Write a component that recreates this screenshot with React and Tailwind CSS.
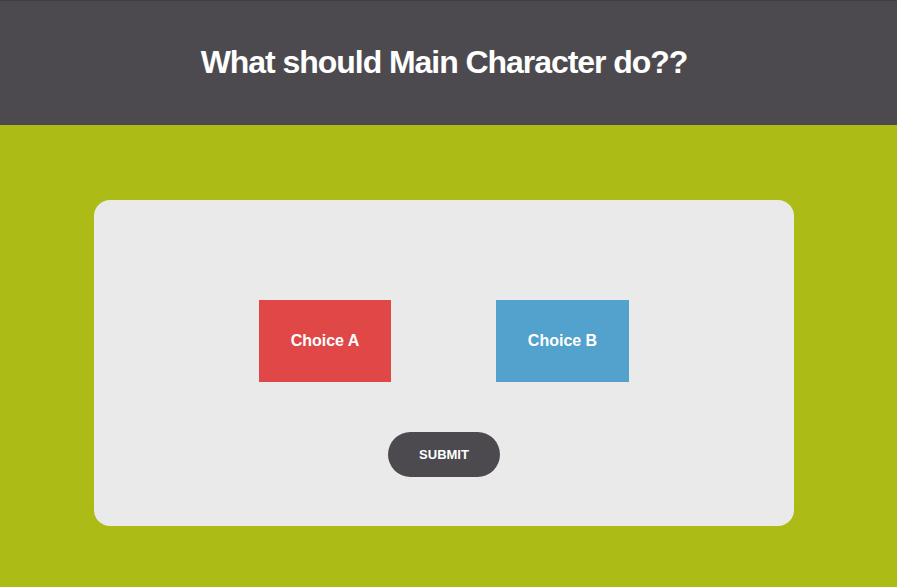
import React, { useState } from 'react';

const App = () => {
    const [choice, setChoice] = useState(null);

    return (
        <div className="min-h-screen bg-[#adbb17] font-['Liberation_Sans',Arial,sans-serif]">
            {/* Header */}
            <div className="h-[125px] w-full bg-[#4c4a4e] border-t border-[#3b4046] flex items-center justify-center pr-[9px]">
                <h1 className="text-[32px] leading-none font-bold text-white tracking-[-1.05px] pb-[2px]">What should Main Character do??</h1>
            </div>

            {/* Card */}
            <div className="pt-[75px] pl-[94px]">
                <div className="w-[700px] h-[326px] bg-[#eaeaea] rounded-[16px] flex flex-col items-center pt-[100px]">
                    <div className="flex gap-[105px]">
                        <button
                            className="w-[132px] h-[82px] bg-[#e04747] text-white text-[16px] font-bold"
                            onClick={() => setChoice('A')}
                        >
                            Choice A
                        </button>
                        <button
                            className="w-[133px] h-[82px] bg-[#53a1cd] text-white text-[16px] font-bold"
                            onClick={() => setChoice('B')}
                        >
                            Choice B
                        </button>
                    </div>
                    <button className="mt-[50px] w-[112px] h-[45px] rounded-full bg-[#4c4a4e] text-white text-[13px] font-bold">
                        SUBMIT
                    </button>
                </div>
            </div>
        </div>
    );
};

export default App;
